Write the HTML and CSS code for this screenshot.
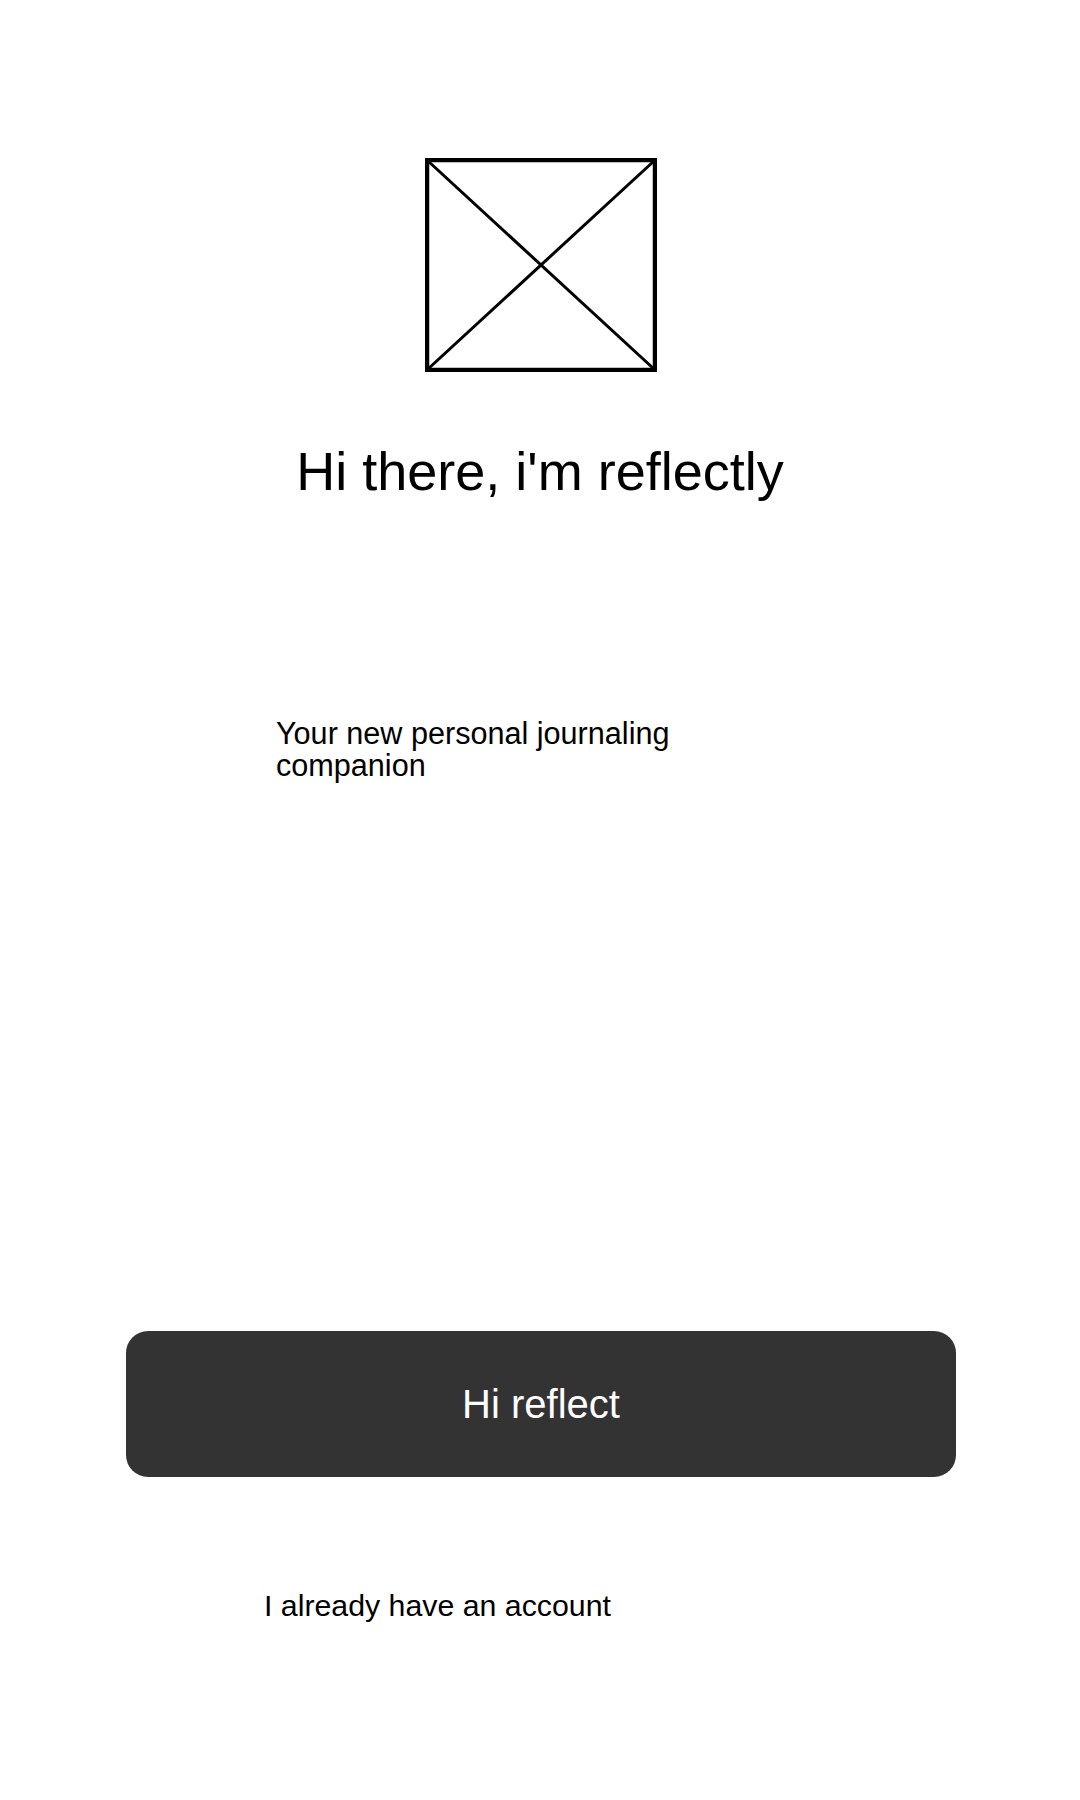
FILE: index.html
```html
<!DOCTYPE html>
<html lang="en">
<head>
<meta charset="utf-8">
<title>reflectly</title>
<link rel="stylesheet" href="styles.css">
</head>
<body>
<main class="screen">
  <div class="logo">
    <svg width="232" height="214" viewBox="0 0 232 214" aria-hidden="true">
      <rect x="2" y="2" width="228" height="210" fill="none" stroke="#000" stroke-width="4.5"/>
      <line x1="3" y1="3" x2="229" y2="211" stroke="#000" stroke-width="3"/>
      <line x1="229" y1="3" x2="3" y2="211" stroke="#000" stroke-width="3"/>
    </svg>
  </div>
  <h1 class="title">Hi there, i'm reflectly</h1>
  <p class="subtitle">Your new personal journaling companion</p>
  <button class="primary">Hi reflect</button>
  <a class="link">I already have an account</a>
</main>
</body>
</html>
```
FILE: styles.css
```css
html, body {
  margin: 0;
  padding: 0;
  background: #ffffff;
}
body {
  font-family: "Liberation Sans", Arial, sans-serif;
  color: #000;
}
.screen {
  width: 1080px;
  height: 1800px;
  display: flex;
  flex-direction: column;
  padding-top: 158px;
  box-sizing: border-box;
}
.logo {
  display: flex;
  justify-content: center;
  padding-left: 2px;
  height: 214px;
}
.logo svg {
  display: block;
}
.title {
  margin: 69px 0 0;
  font-size: 54px;
  line-height: 61px;
  font-weight: normal;
  text-align: center;
}
.subtitle {
  margin: 215px 0 0 276px;
  width: 480px;
  font-size: 30.6px;
  line-height: 32px;
}
.primary {
  margin: 550px 0 0 126px;
  width: 830px;
  height: 146px;
  border: none;
  border-radius: 22px;
  background: #333333;
  color: #ffffff;
  font-family: "Liberation Sans", Arial, sans-serif;
  font-size: 40px;
  padding: 0;
}
.link {
  margin: 113px 0 0 264px;
  font-size: 30.3px;
  line-height: 32px;
  color: #000;
}
```
